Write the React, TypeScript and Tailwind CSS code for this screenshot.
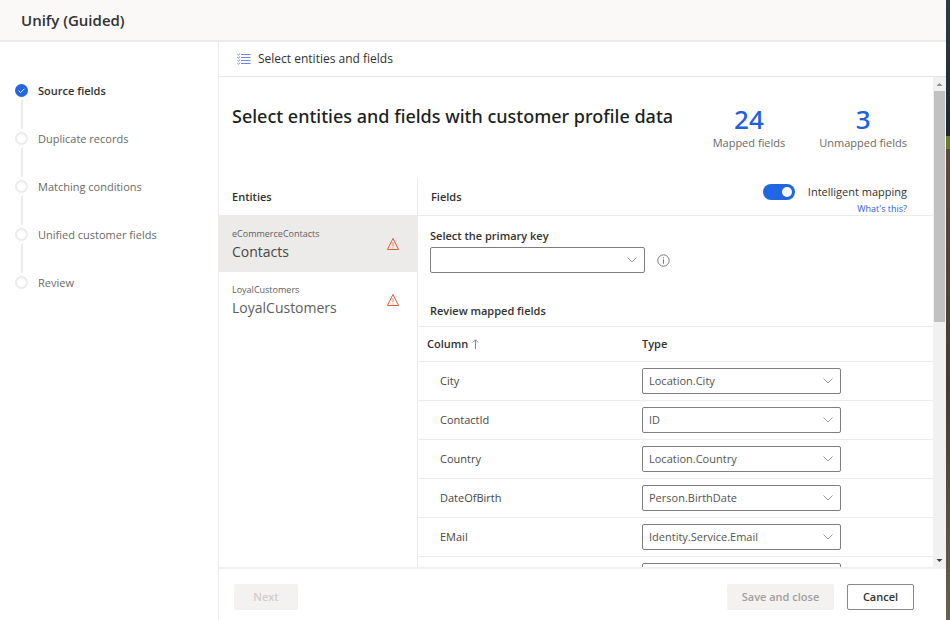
import { useState } from "react";
import type { ReactNode } from "react";

const steps = [
  { label: "Source fields", done: true },
  { label: "Duplicate records", done: false },
  { label: "Matching conditions", done: false },
  { label: "Unified customer fields", done: false },
  { label: "Review", done: false },
];

const entities = [
  { source: "eCommerceContacts", name: "Contacts" },
  { source: "LoyalCustomers", name: "LoyalCustomers" },
];

const rows = [
  { column: "City", type: "Location.City" },
  { column: "ContactId", type: "ID" },
  { column: "Country", type: "Location.Country" },
  { column: "DateOfBirth", type: "Person.BirthDate" },
  { column: "EMail", type: "Identity.Service.Email" },
  { column: "", type: "" },
];

function ChecklistIcon() {
  return (
    <svg width="14" height="12" viewBox="0 0 14 12" fill="none" stroke="#6f86ee" aria-hidden="true">
      <path d="M4 1.5h9.5M4 4.5h9.5M4 7.5h9.5M4 10.5h9.5" />
      <path d="M.5 1.3l.9.9L3.2.5M.5 4.3l.9.9 1.8-1.7M.5 7.3l.9.9 1.8-1.7M.5 10.3l.9.9 1.8-1.7" />
    </svg>
  );
}

function WarningIcon() {
  return (
    <svg width="14" height="14" viewBox="0 0 14 14" fill="none" aria-hidden="true" className="shrink-0">
      <path d="M7 1.4L12.6 12.5H1.4z" stroke="#dc5f3c" />
      <path d="M7 5v4.5M7 10.4v1.1" stroke="#e8905c" />
    </svg>
  );
}

function Chevron() {
  return (
    <svg
      width="10"
      height="6"
      viewBox="0 0 10 6"
      fill="none"
      stroke="#9a9896"
      aria-hidden="true"
      className="pointer-events-none absolute top-1/2 right-2 -translate-y-1/2"
    >
      <path d="M.5.5L5 5 9.5.5" />
    </svg>
  );
}

function Dropdown({ id, label, children }: { id?: string; label?: string; children: ReactNode }) {
  return (
    <div className="relative">
      <select
        id={id}
        aria-label={label}
        className="block h-[26px] w-full appearance-none rounded-xs border border-[#807e7c] bg-white pr-6 pl-1.5 text-[11px] text-[#55534f]"
      >
        {children}
      </select>
      <Chevron />
    </div>
  );
}

function Step({ label, done, last }: { label: string; done: boolean; last: boolean }) {
  return (
    <li className="flex gap-[10px]">
      <div className="flex w-[13px] flex-col items-center">
        {done ? (
          <svg width="13" height="13" viewBox="0 0 13 13" aria-hidden="true">
            <circle cx="6.5" cy="6.5" r="6.5" fill="#2266e3" />
            <path d="M3.6 6.6l2 2 3.8-3.8" fill="none" stroke="#fff" />
          </svg>
        ) : (
          <span className="size-[13px] rounded-full border-2 border-[#edebe9]" />
        )}
        {!last && <span className="my-[3px] h-[29px] w-0.5 bg-[#edebe9]" />}
      </div>
      <a
        href="#"
        aria-current={done ? "step" : undefined}
        className={
          done
            ? "h-[14px] text-[11px] leading-[14px] font-semibold text-[#323130]"
            : "h-[14px] text-[11px] leading-[14px] text-[#6b6966]"
        }
      >
        {label}
      </a>
    </li>
  );
}

function Stat({ value, label }: { value: string; label: string }) {
  return (
    <div className="text-center">
      <p className="font-['Noto_Sans',sans-serif] text-[26px] leading-[30px] font-medium text-[#2060dd]">{value}</p>
      <p className="text-[11px] leading-[18px] text-[#6b6966]">{label}</p>
    </div>
  );
}

export default function App() {
  const [mapping, setMapping] = useState(true);

  return (
    <div className="flex h-screen overflow-hidden bg-white font-['Open_Sans','Segoe_UI',sans-serif] text-[#323130]">
      <div className="flex min-w-0 flex-1 flex-col">
        <header className="flex h-[42px] shrink-0 items-center border-b-2 border-[#edebe9] bg-[#faf9f8] px-[21px]">
          <h1 className="text-[15px] font-semibold">Unify (Guided)</h1>
        </header>

        <div className="flex min-h-0 flex-1">
          <nav aria-label="Steps" className="w-[219px] shrink-0 border-r border-[#edebe9] px-[15px] pt-[42px]">
            <ol>
              {steps.map((s, i) => (
                <Step key={s.label} {...s} last={i === steps.length - 1} />
              ))}
            </ol>
          </nav>

          <main className="flex min-w-0 flex-1 flex-col">
            <div className="flex h-[35px] shrink-0 items-center gap-[7px] border-b border-[#e6e4e2] px-[18px] text-[12px]">
              <ChecklistIcon />
              <span>Select entities and fields</span>
            </div>

            <div className="flex min-h-0 flex-1">
              <div className="flex min-w-0 flex-1 flex-col overflow-hidden">
                <div className="flex h-[101px] shrink-0 items-start justify-between pr-[26px] pl-[13px]">
                  <h2 className="pt-[27px] font-['Noto_Sans',sans-serif] text-[18px] leading-6 font-medium text-[#201f1e]">
                    Select entities and fields with customer profile data
                  </h2>
                  <div className="flex gap-[34px] pt-[27px]">
                    <Stat value="24" label="Mapped fields" />
                    <Stat value="3" label="Unmapped fields" />
                  </div>
                </div>

                <div className="flex min-h-0 flex-1">
                  <section className="w-[199px] shrink-0 border-r border-[#edebe9]">
                    <h3 className="flex h-[38px] items-center border-b border-[#edebe9] px-[13px] pt-0.5 text-[11px] font-semibold">
                      Entities
                    </h3>
                    {entities.map((e, i) => (
                      <button
                        key={e.name}
                        type="button"
                        className={
                          i === 0
                            ? "flex h-14 w-full items-center justify-between bg-[#edebe9] pr-[17px] pl-[13px] text-left text-[#484644]"
                            : "flex h-14 w-full items-center justify-between pr-[17px] pl-[13px] text-left text-[#605e5c]"
                        }
                      >
                        <span>
                          <span className="block text-[9px] leading-4 text-[#605e5c]">{e.source}</span>
                          <span className="block text-[14px] leading-5">{e.name}</span>
                        </span>
                        <WarningIcon />
                      </button>
                    ))}
                  </section>

                  <section className="flex min-w-0 flex-1 flex-col">
                    <div className="flex h-[38px] shrink-0 items-center justify-between border-b border-[#edebe9] pt-0.5 pr-[26px] pl-[13px]">
                      <h3 className="text-[11px] font-semibold">Fields</h3>
                      <div className="grid grid-cols-[auto_auto] items-center gap-x-[13px] pt-1 text-right">
                        <input
                          id="mapping"
                          type="checkbox"
                          role="switch"
                          checked={mapping}
                          onChange={(e) => setMapping(e.target.checked)}
                          className="flex h-4 w-8 appearance-none items-center rounded-full bg-[#8a8886] px-[3px] before:size-[10px] before:rounded-full before:bg-white checked:justify-end checked:bg-[#2266e3]"
                        />
                        <label htmlFor="mapping" className="text-[11px] leading-[18px]">
                          Intelligent mapping
                        </label>
                        <a href="#" className="col-start-2 text-[9px] leading-4 text-[#2f62dc]">
                          What's this?
                        </a>
                      </div>
                    </div>

                    <div className="px-3 pt-[11px]">
                      <label htmlFor="primary-key" className="block text-[11px] leading-[18px] font-semibold">
                        Select the primary key
                      </label>
                      <div className="mt-0.5 flex items-center gap-3">
                        <div className="w-[215px]">
                          <Dropdown id="primary-key">
                            <option value=""></option>
                          </Dropdown>
                        </div>
                        <button type="button" aria-label="About the primary key">
                          <svg width="13" height="13" viewBox="0 0 13 13" fill="none" stroke="#7a7876" aria-hidden="true">
                            <circle cx="6.5" cy="6.5" r="5.7" />
                            <path d="M6.5 5.4v4.3M6.5 3.2v1.2" />
                          </svg>
                        </button>
                      </div>
                      <h3 className="mt-[29px] mb-1.5 text-[11px] leading-[18px] font-semibold">Review mapped fields</h3>
                    </div>

                    <table className="w-full shrink-0 table-fixed border-collapse text-left text-[11px]">
                      <thead>
                        <tr className="h-[35px] border-y border-[#edebe9]">
                          <th aria-sort="ascending" className="w-[224px] pl-[9px] font-semibold">
                            <span className="flex items-center gap-1">
                              Column
                              <svg width="7" height="10" viewBox="0 0 7 10" fill="none" stroke="#7a8a9a" aria-hidden="true">
                                <path d="M3.5 10V1M.8 3.5L3.5.8l2.7 2.7" />
                              </svg>
                            </span>
                          </th>
                          <th className="font-semibold">Type</th>
                        </tr>
                      </thead>
                      <tbody>
                        {rows.map((r) => (
                          <tr key={r.column} className="h-[39px] border-b border-[#edebe9]">
                            <td className="pl-[22px] text-[#484644]">{r.column}</td>
                            <td>
                              <div className="w-[199px]">
                                <Dropdown label={`Type of ${r.column}`}>
                                  <option>{r.type}</option>
                                </Dropdown>
                              </div>
                            </td>
                          </tr>
                        ))}
                      </tbody>
                    </table>
                  </section>
                </div>
              </div>

              <div aria-hidden="true" className="flex w-[13px] shrink-0 flex-col items-center bg-[#f1f1f1]">
                <svg width="13" height="14" viewBox="0 0 13 14" fill="#8f8f8f">
                  <path d="M3.5 9h6l-3-3z" />
                </svg>
                <div className="h-[231px] w-[11px] bg-[#c1c1c1]" />
                <svg width="13" height="14" viewBox="0 0 13 14" fill="#404040" className="mt-auto">
                  <path d="M3.5 6h6l-3 3z" />
                </svg>
              </div>
            </div>

            <footer className="flex h-[53px] shrink-0 items-start gap-[13px] border-t-2 border-[#f0efee] pt-[15px] pr-8 pl-[15px] text-[11px] font-semibold">
              <button type="button" disabled className="mr-auto h-[26px] w-16 rounded-xs bg-[#f3f2f1] text-[#d0cecc]">
                Next
              </button>
              <button type="button" disabled className="h-[26px] w-[107px] rounded-xs bg-[#f3f2f1] text-[#a19f9d]">
                Save and close
              </button>
              <button type="button" className="h-[26px] w-[67px] rounded-xs border border-[#8a8886] bg-white">
                Cancel
              </button>
            </footer>
          </main>
        </div>
      </div>

      <div aria-hidden="true" className="flex w-1 shrink-0 flex-col">
        <div className="h-[22%] bg-linear-to-b from-[#2b3d49] to-[#1b2833]" />
        <div className="h-[2%] bg-[#6c7a2e]" />
        <div className="flex-1 bg-linear-to-b from-[#5f4938] via-[#4a3a30] to-[#6b5f4c]" />
      </div>
    </div>
  );
}
